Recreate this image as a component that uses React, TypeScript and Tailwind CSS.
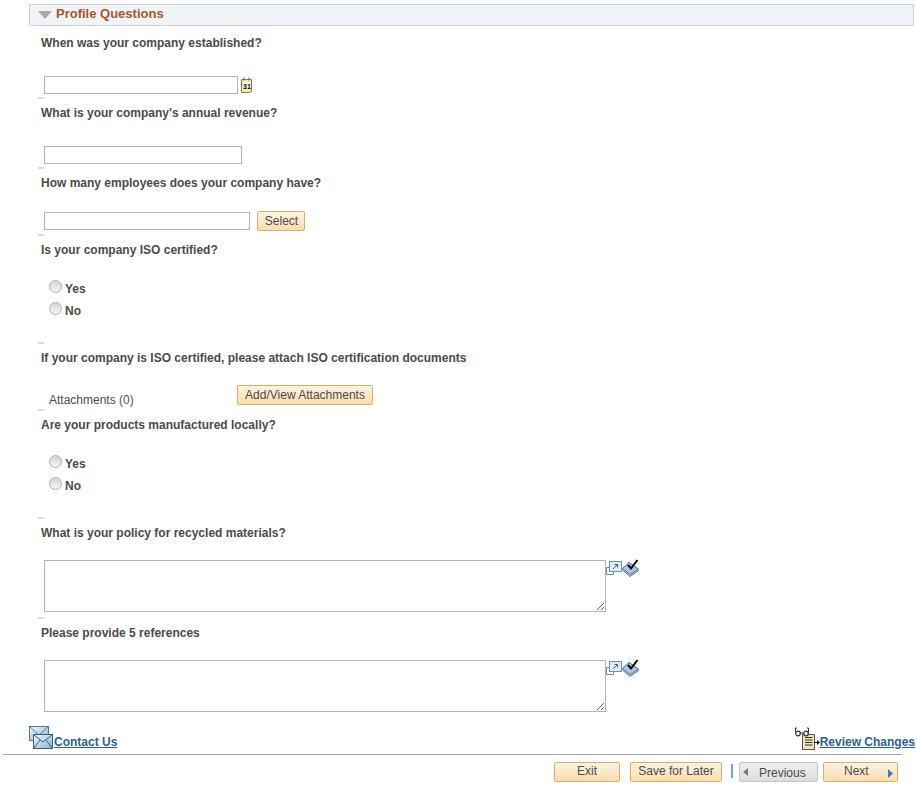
import React from "react";

const font = "font-['Liberation_Sans',Arial,sans-serif]";

function Tick({ className = "" }: { className?: string }) {
  return <div className={`ml-[38px] h-[2px] w-[6px] bg-[#dddddd] ${className}`} />;
}

function Q({ children, top }: { children: React.ReactNode; top: string }) {
  return <div className={`ml-[41px] h-[14px] text-[12px] leading-[14px] font-bold text-[#4b4b4b] ${top}`}>{children}</div>;
}

function Btn({ children, className = "" }: { children: React.ReactNode; className?: string }) {
  return (
    <button className={`box-border h-[20px] rounded-[2px] border border-[#e2ab6c] bg-gradient-to-b from-[#fdf3e2] to-[#fbdcae] text-center text-[12px] leading-[16px] text-[#4b4b4b] ${className}`}>
      {children}
    </button>
  );
}

function Radio({ label, className = "" }: { label: string; className?: string }) {
  return (
    <div className={`ml-[49px] flex h-[14px] items-start ${className}`}>
      <span className="mt-[-2px] box-border h-[13px] w-[13px] rounded-full border border-[#b0b0b0] bg-gradient-to-b from-[#d4d4d4] to-[#f6f6f6]" />
      <span className="ml-[3px] text-[12px] leading-[14px] font-bold text-[#4b4b4b]">{label}</span>
    </div>
  );
}

function Field({ w }: { w: string }) {
  return <div className={`box-border h-[18px] border border-[#b4b4b4] bg-white ${w}`} />;
}

function ExpandIcon() {
  return (
    <svg width="16" height="14" viewBox="0 0 16 14" className="block">
      <path d="M3.5 6.5 H0.5 V13.5 H7.5 V10.5" fill="none" stroke="#7d8a94" />
      <rect x="3.5" y="0.5" width="12" height="10" fill="#dcebf6" stroke="#6f93b3" />
      <path d="M7 8 L11.5 3.5 M8.5 3.5 H11.5 V6.5" fill="none" stroke="#4d5f70" />
    </svg>
  );
}

function SpellIcon() {
  return (
    <svg width="17" height="18" viewBox="0 0 17 18" className="block">
      <path d="M0.5 11 L7 3.5 L16.5 11.5 L8 17.5 Z" fill="#f1c6d2" stroke="#4f7596" />
      <path d="M0.5 9.5 L7 3.5 L16.5 10 L8 15.5 Z" fill="#a8c8e2" stroke="#4f7596" />
      <path d="M6 6 L9 9.5 L15.5 1" fill="none" stroke="#000" strokeWidth="2" />
    </svg>
  );
}

function TextAreaRow() {
  return (
    <div className="ml-[44px] flex items-start">
      <div className="relative box-border h-[52px] w-[562px] border border-[#b4b4b4] bg-white">
        <svg width="9" height="9" viewBox="0 0 9 9" className="absolute right-0 bottom-0">
          <path d="M1 8 L8 1 M5 8 L8 5" stroke="#666" strokeWidth="1" />
        </svg>
      </div>
      <div className="flex items-start">
        <div className="mt-[1px]"><ExpandIcon /></div>
        <div className="mt-[-1px] h-[17px]"><SpellIcon /></div>
      </div>
    </div>
  );
}

export default function App() {
  return (
    <div className={`h-[786px] w-[917px] overflow-hidden bg-white ${font}`}>
      <div className="pt-[4px]">
        <div className="ml-[29px] box-border flex h-[22px] w-[885px] items-center border border-[#cdd4d8] bg-[#f1f4f6]">
          <svg width="14" height="8" viewBox="0 0 14 8" className="ml-[8px] mt-[-1px]">
            <path d="M0 0 H14 L7 8 Z" fill="#a8a8a8" />
          </svg>
          <span className="ml-[4px] mt-[-2px] text-[13px] leading-[16px] font-bold text-[#a8562a]">Profile Questions</span>
        </div>

        <Q top="mt-[10px]">When was your company established?</Q>
        <div className="ml-[44px] mt-[26px] flex h-[18px] items-start">
          <Field w="w-[194px]" />
          <svg width="13" height="16" viewBox="0 0 13 16" className="ml-[2px] mt-[1px]">
            <path d="M1.5 2.5 H11.5 V14.5 L9.5 15.5 H1.5 Z" fill="#f7e6b5" stroke="#8d7a4a" />
            <path d="M4 0.5 V3.5 M9 0.5 V3.5" stroke="#6b5a32" />
            <rect x="3" y="5" width="7" height="7" fill="#fff" />
            <text x="3" y="11.5" fontSize="7" fontWeight="bold" fill="#000" fontFamily="Liberation Sans">31</text>
          </svg>
        </div>
        <Tick className="mt-[3px]" />

        <Q top="mt-[7px]">What is your company's annual revenue?</Q>
        <div className="ml-[44px] mt-[26px]"><Field w="w-[198px]" /></div>
        <Tick className="mt-[3px]" />

        <Q top="mt-[7px]">How many employees does your company have?</Q>
        <div className="ml-[44px] mt-[22px] flex h-[19px] items-start">
          <Field w="w-[206px]" />
          <Btn className="ml-[7px] mt-[-1px] w-[48px] pl-[1px]">Select</Btn>
        </div>
        <Tick className="mt-[3px]" />

        <Q top="mt-[7px]">Is your company ISO certified?</Q>
        <Radio label="Yes" className="mt-[25px]" />
        <Radio label="No" className="mt-[8px]" />
        <Tick className="mt-[24px]" />

        <Q top="mt-[7px]">If your company is ISO certified, please attach ISO certification documents</Q>
        <div className="mt-[20px] flex h-[24px] items-start">
          <span className="ml-[49px] mt-[8px] w-[188px] text-[12px] leading-[14px] text-[#4b4b4b]">
            Attachments <span className="text-[#5a4a82]">(0)</span>
          </span>
          <Btn className="w-[136px]">Add/View Attachments</Btn>
        </div>
        <Tick />

        <Q top="mt-[7px]">Are your products manufactured locally?</Q>
        <Radio label="Yes" className="mt-[25px]" />
        <Radio label="No" className="mt-[8px]" />
        <Tick className="mt-[24px]" />

        <Q top="mt-[7px]">What is your policy for recycled materials?</Q>
        <div className="mt-[20px]"><TextAreaRow /></div>
        <Tick className="mt-[5px]" />

        <Q top="mt-[7px]">Please provide 5 references</Q>
        <div className="mt-[20px]"><TextAreaRow /></div>

        <div className="mt-[13px] flex h-[29px] items-end justify-between pb-[5px] pl-[29px] pr-[2px]">
          <a className="flex items-end text-[12px] leading-[14px] font-bold text-[#2f5f93]">
            <svg width="25" height="23" viewBox="0 0 25 23" className="block">
              <defs>
                <linearGradient id="env" x1="0" y1="0" x2="1" y2="1">
                  <stop offset="0" stopColor="#f2f7fb" />
                  <stop offset="1" stopColor="#8fb0cc" />
                </linearGradient>
              </defs>
              <rect x="0.5" y="0.5" width="19" height="14" fill="url(#env)" stroke="#4f7ba0" />
              <path d="M0.5 0.5 L10 9 L19.5 0.5" fill="none" stroke="#4f7ba0" />
              <rect x="4.5" y="8.5" width="19" height="14" fill="url(#env)" stroke="#355f82" />
              <path d="M4.5 8.5 L14 16 L23.5 8.5 M4.5 22.5 L11 14 M23.5 22.5 L17 14" fill="none" stroke="#355f82" />
            </svg>
            <span className="underline">Contact Us</span>
          </a>
          <a className="flex items-end text-[12px] leading-[14px] font-bold text-[#2f5f93]">
            <svg width="25" height="23" viewBox="0 0 25 23" className="mb-[-1px] block">
              <rect x="7.5" y="7.5" width="12" height="15" fill="#efe3bd" stroke="#555" />
              <path d="M10 10.5 H17.5 M10 13 H17.5 M10 15.5 H17.5 M10 18 H17.5" stroke="#333" />
              <circle cx="3" cy="6.5" r="2.3" fill="#fff" stroke="#333" strokeWidth="1.2" />
              <circle cx="11" cy="6.5" r="2.3" fill="#fff" stroke="#333" strokeWidth="1.2" />
              <path d="M5 6 H9 M0.5 5.5 V1 H2 M13.5 5.5 V1 H12" fill="none" stroke="#333" />
              <path d="M19 15.5 H22" fill="none" stroke="#111" />
              <path d="M22 13 L25 15.5 L22 18 Z" fill="#111" />
            </svg>
            <span className="underline">Review Changes</span>
          </a>
        </div>

        <div className="ml-[3px] h-px w-[899px] bg-[#a3a3a8]" />

        <div className="ml-[554px] mt-[7px] flex items-start">
          <Btn className="w-[66px] pb-[2px]">Exit</Btn>
          <Btn className="ml-[10px] w-[92px] pb-[2px]">Save for Later</Btn>
          <div className="ml-[9px] mt-[2px] h-[14px] w-[2px] bg-[#6aa9d8]" />
          <div className="ml-[6px] box-border flex h-[20px] w-[79px] items-center rounded-[2px] border border-[#c6c6c6] bg-gradient-to-b from-[#f0f0f0] to-[#dcdcdc] text-[12px] leading-[16px] text-[#4b4b4b]">
            <svg width="5" height="8" viewBox="0 0 5 8" className="ml-[3px]"><path d="M5 0 V8 L0 4 Z" fill="#777" /></svg>
            <span className="ml-[11px] mt-[1px]">Previous</span>
          </div>
          <Btn className="ml-[5px] flex w-[75px] items-center">
            <span className="ml-[20px] mt-[-2px]">Next</span>
            <svg width="5" height="9" viewBox="0 0 5 9" className="ml-[19px] mt-[2px]"><path d="M0 0 V9 L5 4.5 Z" fill="#3d79b5" /></svg>
          </Btn>
        </div>
      </div>
    </div>
  );
}
